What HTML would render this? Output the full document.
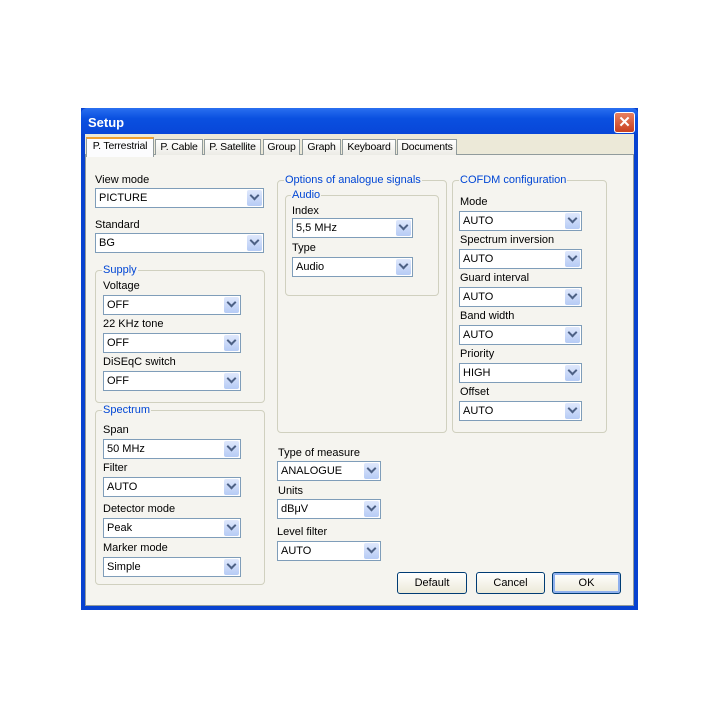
<!DOCTYPE html><html><head><style>
body{margin:0;width:720px;height:720px;background:#fff;position:relative;font-family:"Liberation Sans",sans-serif;font-size:11px;color:#000;overflow:hidden}
.a{position:absolute}
.win{left:81px;top:108px;width:557px;height:502px;background:#0842d0;}
.title{left:81px;top:108px;width:557px;height:26px;background:linear-gradient(#2a6ff0,#0a50e0 40%,#0846d8);border-radius:6px 6px 0 0}
.client{left:85px;top:134px;width:549px;height:472px;background:#ece9d8}
.close{left:614px;top:112px;width:19px;height:19px;background:linear-gradient(#e88060,#c84020);border:1px solid #fff;border-radius:3px;color:#fff;font-weight:bold;font-size:15px;line-height:19px;text-align:center}
.panel{left:85px;top:154px;width:547px;height:450px;background:#f5f4ef;border:1px solid #919b9c}
.tab{top:139px;height:15px;background:linear-gradient(#fff,#ecebe5);border:1px solid #919b9c;border-bottom:none;line-height:15px;text-align:center;font-size:10.5px;letter-spacing:-0.2px;white-space:nowrap;overflow:hidden}
.tab.sel{top:137px;height:18px;background:#fcfcfe;border-top:2px solid #f0a030;z-index:2}
.cb{height:18px;background:#fff;border:1px solid #7f9db9;line-height:18px;padding-left:3px;box-sizing:border-box;height:20px}
.cb:after{content:"";position:absolute;right:1px;top:1px;width:15px;height:16px;background:linear-gradient(#dfe8fc,#b6cbf5);border-radius:2px}
.cb b{position:absolute;right:5px;top:4px;width:5px;height:5px;border-right:2px solid #4d6185;border-bottom:2px solid #4d6185;transform:rotate(45deg);z-index:2;top:3px}
.g{border:1px solid #d0d0bf;border-radius:4px}
.gl{color:#0046d5;background:#f5f4ef;padding:0 1px}
.btn{height:21px;border:1px solid #003c74;border-radius:3px;background:linear-gradient(#fff,#ece9d8);text-align:center;line-height:21px;box-sizing:border-box;height:22px}
</style></head><body>
<div class="a win"></div>
<div class="a title"></div>
<div class="a" style="left:88px;top:115px;color:#fff;font-weight:bold;font-size:13px">Setup</div>
<div class="a close">✕</div>
<div class="a client"></div>
<div class="a panel"></div>
<div class="a tab sel" style="left:86px;width:66px">P. Terrestrial</div>
<div class="a tab" style="left:155px;width:46px">P. Cable</div>
<div class="a tab" style="left:204px;width:55px">P. Satellite</div>
<div class="a tab" style="left:263px;width:35px">Group</div>
<div class="a tab" style="left:302px;width:37px">Graph</div>
<div class="a tab" style="left:342px;width:52px">Keyboard</div>
<div class="a tab" style="left:397px;width:58px">Documents</div>

<div class="a" style="left:95px;top:174px">View mode</div>
<div class="a cb" style="left:95px;top:188px;width:169px">PICTURE<b></b></div>
<div class="a" style="left:95px;top:219px">Standard</div>
<div class="a cb" style="left:95px;top:233px;width:169px">BG<b></b></div>

<div class="a g" style="left:95px;top:270px;width:168px;height:131px"></div>
<div class="a gl" style="left:102px;top:264px">Supply</div>
<div class="a" style="left:103px;top:280px">Voltage</div>
<div class="a cb" style="left:103px;top:295px;width:138px">OFF<b></b></div>
<div class="a" style="left:103px;top:318px">22 KHz tone</div>
<div class="a cb" style="left:103px;top:333px;width:138px">OFF<b></b></div>
<div class="a" style="left:103px;top:356px">DiSEqC switch</div>
<div class="a cb" style="left:103px;top:371px;width:138px">OFF<b></b></div>

<div class="a g" style="left:95px;top:410px;width:168px;height:173px"></div>
<div class="a gl" style="left:102px;top:404px">Spectrum</div>
<div class="a" style="left:103px;top:424px">Span</div>
<div class="a cb" style="left:103px;top:439px;width:138px">50 MHz<b></b></div>
<div class="a" style="left:103px;top:462px">Filter</div>
<div class="a cb" style="left:103px;top:477px;width:138px">AUTO<b></b></div>
<div class="a" style="left:103px;top:503px">Detector mode</div>
<div class="a cb" style="left:103px;top:518px;width:138px">Peak<b></b></div>
<div class="a" style="left:103px;top:542px">Marker mode</div>
<div class="a cb" style="left:103px;top:557px;width:138px">Simple<b></b></div>

<div class="a g" style="left:277px;top:180px;width:168px;height:251px"></div>
<div class="a gl" style="left:284px;top:174px">Options of analogue signals</div>
<div class="a g" style="left:285px;top:195px;width:152px;height:99px"></div>
<div class="a gl" style="left:291px;top:189px">Audio</div>
<div class="a" style="left:292px;top:205px">Index</div>
<div class="a cb" style="left:292px;top:218px;width:121px">5,5 MHz<b></b></div>
<div class="a" style="left:292px;top:242px">Type</div>
<div class="a cb" style="left:292px;top:257px;width:121px">Audio<b></b></div>

<div class="a g" style="left:452px;top:180px;width:153px;height:251px"></div>
<div class="a gl" style="left:459px;top:174px">COFDM configuration</div>
<div class="a" style="left:460px;top:196px">Mode</div>
<div class="a cb" style="left:459px;top:211px;width:123px">AUTO<b></b></div>
<div class="a" style="left:460px;top:234px">Spectrum inversion</div>
<div class="a cb" style="left:459px;top:249px;width:123px">AUTO<b></b></div>
<div class="a" style="left:460px;top:272px">Guard interval</div>
<div class="a cb" style="left:459px;top:287px;width:123px">AUTO<b></b></div>
<div class="a" style="left:460px;top:310px">Band width</div>
<div class="a cb" style="left:459px;top:325px;width:123px">AUTO<b></b></div>
<div class="a" style="left:460px;top:348px">Priority</div>
<div class="a cb" style="left:459px;top:363px;width:123px">HIGH<b></b></div>
<div class="a" style="left:460px;top:386px">Offset</div>
<div class="a cb" style="left:459px;top:401px;width:123px">AUTO<b></b></div>

<div class="a" style="left:278px;top:447px">Type of measure</div>
<div class="a cb" style="left:277px;top:461px;width:104px">ANALOGUE<b></b></div>
<div class="a" style="left:278px;top:485px">Units</div>
<div class="a cb" style="left:277px;top:499px;width:104px">dBμV<b></b></div>
<div class="a" style="left:277px;top:526px">Level filter</div>
<div class="a cb" style="left:277px;top:541px;width:104px">AUTO<b></b></div>

<div class="a btn" style="left:397px;top:572px;width:70px">Default</div>
<div class="a btn" style="left:476px;top:572px;width:69px">Cancel</div>
<div class="a btn" style="left:552px;top:572px;width:69px;box-shadow:inset 0 0 0 2px #8fb0ee">OK</div>
</body></html>
